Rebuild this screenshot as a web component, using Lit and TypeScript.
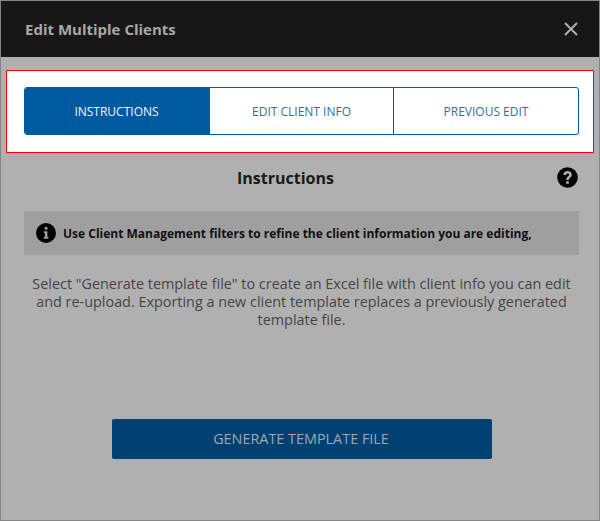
import { LitElement, html, css } from "lit";
import { customElement } from "lit/decorators.js";

@customElement("app-root")
export class AppRoot extends LitElement {
  static styles = css`
    :host { display: block; width: 600px; height: 521px; font-family: "Open Sans", sans-serif; }
    * { box-sizing: border-box; }
    .dialog { width: 600px; height: 521px; border: 1px solid #858585; background: #b0b0b0; display: flex; flex-direction: column; }
    .head { height: 56px; background: #171717; display: flex; align-items: center; justify-content: space-between; padding: 0 20px 0 24px; flex: none; }
    .title { font-size: 15px; font-weight: 700; color: #a8a8a8; }
    .close { display: block; width: 16px; height: 16px; }
    .focus { margin: 13px 5px 0; height: 83px; background: #fff; border: 1px solid #ff0000; padding: 16px 14px 0 17px; flex: none; }
    .tabs { display: flex; height: 48px; border: 1px solid #005a9e; border-radius: 3px; overflow: hidden; }
    .tab { display: flex; align-items: center; justify-content: center; font-size: 12px; color: #2f6fa7; }
    .tab.a { width: 185px; background: #005a9e; color: #f2f6fa; padding-right: 2px; }
    .tab.b { width: 184px; border-right: 1px solid #005a9e; }
    .tab.c { flex: 1; }
    .heading { position: relative; margin: 14px 20px 0 17px; padding-right: 26px; height: 22px; text-align: center; font-size: 16px; font-weight: 700; line-height: 22px; color: #1a1a1a; }
    .help { position: absolute; right: 1px; top: 0; width: 21px; height: 21px; }
    .note { margin: 22px 20px 0 23px; height: 44px; background: #9f9f9f; display: flex; align-items: center; gap: 7px; padding-left: 12px; font-size: 12px; font-weight: 700; color: #111; }
    .note svg { width: 20px; height: 20px; flex: none; }
    .copy { margin: 20px 28px 0 31px; font-size: 14.4px; line-height: 18px; text-align: center; color: #454545; }
    .btn { margin: 90px 0 0 111px; width: 380px; height: 40px; padding: 0 2px 2px 0; background: #004173; border-radius: 2px; display: flex; align-items: center; justify-content: center; font-size: 14.4px; color: #a0a8ae; }
  `;

  render() {
    return html`
      <div class="dialog">
        <div class="head">
          <span class="title">Edit Multiple Clients</span>
          <svg class="close" viewBox="0 0 16 16"><path d="M2 2L14 14M14 2L2 14" stroke="#b0b0b0" stroke-width="2" fill="none"/></svg>
        </div>
        <div class="focus">
          <div class="tabs">
            <div class="tab a">INSTRUCTIONS</div>
            <div class="tab b">EDIT CLIENT INFO</div>
            <div class="tab c">PREVIOUS EDIT</div>
          </div>
        </div>
        <div class="heading">Instructions
          <svg class="help" viewBox="0 0 21 21"><circle cx="10.5" cy="10.5" r="10.3" fill="#000"/><path d="M6.4 8C6.4 5.4 8.300 4 10.600 4C13 4 14.800 5.400 14.800 7.700C14.800 10.500 11.800 10.400 11.800 13H9.300C9.300 9.400 12.100 9.700 12.100 7.800C12.100 6.900 11.500 6.400 10.600 6.400C9.600 6.400 9.100 7.100 9 8Z" fill="#b0b0b0"/><rect x="9.200" y="14.200" width="2.600" height="2.600" fill="#b0b0b0"/></svg>
        </div>
        <div class="note">
          <svg viewBox="0 0 20 20"><circle cx="10" cy="10" r="10" fill="#000"/><rect x="8.700" y="4" width="2.700" height="2.700" fill="#9f9f9f"/><path d="M7.800 8.300H11.400V14H12.400V15.700H7.800V14H8.800V10H7.800Z" fill="#9f9f9f"/></svg>
          <span>Use Client Management filters to refine the client information you are editing,</span>
        </div>
        <div class="copy">Select "Generate template file" to create an Excel file with client info you can edit and re-upload. Exporting a new client template replaces a previously generated template file.</div>
        <div class="btn">GENERATE TEMPLATE FILE</div>
      </div>
    `;
  }
}
